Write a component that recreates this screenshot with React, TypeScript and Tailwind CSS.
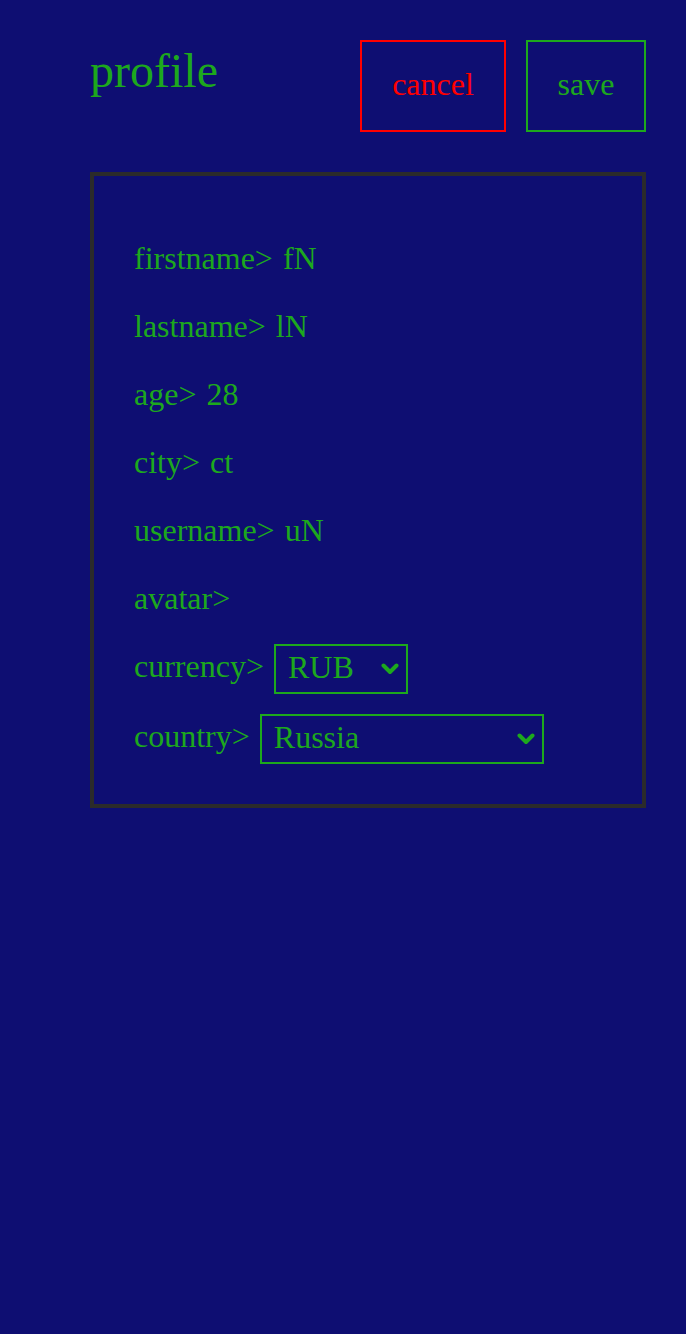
import { useState } from "react"

const rows: [string, string][] = [
  ["firstname", "fN"],
  ["lastname", "lN"],
  ["age", "28"],
  ["city", "ct"],
  ["username", "uN"],
  ["avatar", ""],
]

function Chevron() {
  return (
    <svg
      className="pointer-events-none absolute right-[9px] top-1/2 -translate-y-1/2"
      width="18"
      height="13"
      viewBox="0 0 18 13"
      fill="none"
    >
      <path d="M2.5 3 L9 9.5 L15.5 3" stroke="#1da81d" strokeWidth="4" strokeLinecap="round" strokeLinejoin="round" />
    </svg>
  )
}

function Select({ value, options, onChange, width }: { value: string; options: string[]; onChange: (v: string) => void; width: string }) {
  return (
    <div className={`relative ${width}`}>
      <select
        value={value}
        onChange={(e) => onChange(e.target.value)}
        className="h-[50px] w-full appearance-none border-2 border-[#1da81d] bg-[#0e0e72] pb-1 pl-3 text-[32px] text-[#1da81d] outline-none"
      >
        {options.map((o) => (
          <option key={o}>{o}</option>
        ))}
      </select>
      <Chevron />
    </div>
  )
}

export default function App() {
  const [currency, setCurrency] = useState("RUB")
  const [country, setCountry] = useState("Russia")

  return (
    <div className="min-h-[1334px] bg-[#0e0e72] pl-[90px] pr-[40px] pt-[40px] font-['Liberation_Serif',serif] text-[#1da81d]">
      <div className="flex items-start justify-between">
        <h1 className="mt-[7px] text-[48px] leading-[48px]">profile</h1>
        <div className="flex gap-5">
          <button className="flex h-[92px] w-[146px] items-center justify-center border-2 border-[#ff0000] pb-[4px] text-[32px] leading-[36px] text-[#ff0000]">
            cancel
          </button>
          <button className="flex h-[92px] w-[120px] items-center justify-center border-2 border-[#1da81d] pb-[4px] text-[32px] leading-[36px]">
            save
          </button>
        </div>
      </div>

      <div className="mt-10 border-4 border-[#2b2b2b] px-10 pb-10 pt-16 text-[32px] leading-[36px]">
        <div className="flex flex-col gap-8">
          {rows.map(([k, v]) => (
            <div key={k} className="flex gap-[10px]">
              <span>{k}&gt;</span>
              {v && <span>{v}</span>}
            </div>
          ))}
        </div>
        <div className="mt-[28px] flex items-start gap-[10px]">
          <span className="mt-[4px]">currency&gt;</span>
          <Select value={currency} options={["RUB", "USD", "EUR"]} onChange={setCurrency} width="w-[134px]" />
        </div>
        <div className="mt-5 flex items-start gap-[10px]">
          <span className="mt-[4px]">country&gt;</span>
          <Select value={country} options={["Russia", "USA", "Germany"]} onChange={setCountry} width="w-[284px]" />
        </div>
      </div>
    </div>
  )
}
